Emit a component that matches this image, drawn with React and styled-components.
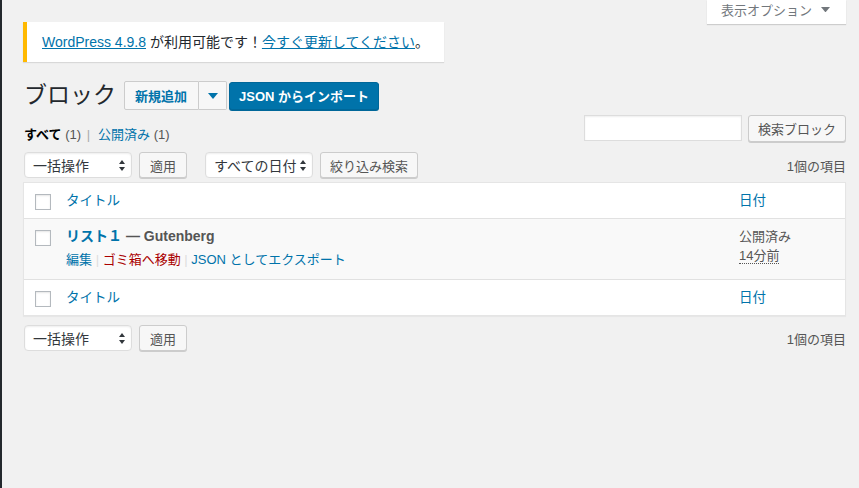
import React from "react";
import styled, { createGlobalStyle } from "styled-components";

const GlobalStyle = createGlobalStyle`
  html, body {
    margin: 0;
    padding: 0;
    background: #f1f1f1;
  }
  body {
    font-family: "Liberation Sans", "Noto Sans CJK JP", sans-serif;
    font-size: 13px;
    color: #444;
  }
  a {
    color: #0073aa;
    text-decoration: none;
  }
`;

const Shell = styled.div`
  display: flex;
  min-height: 488px;
`;

const AdminMenu = styled.div`
  width: 2px;
  flex-shrink: 0;
  background: #23282d;
`;

const Wrap = styled.div`
  flex: 1;
  display: flow-root;
  padding: 0 13px 0 21px;
`;

const ScreenTab = styled.button`
  float: right;
  display: flex;
  align-items: center;
  gap: 9px;
  height: 24px;
  padding: 0 16px 5px 14px;
  border: 0;
  background: #fff;
  box-shadow: 0 1px 1px rgba(0, 0, 0, 0.15);
  font: inherit;
  font-size: 13px;
  color: #72777c;
`;

const Notice = styled.div`
  width: fit-content;
  margin-top: 22px;
  padding: 11px 15px;
  border-left: 4px solid #ffb900;
  background: #fff;
  box-shadow: 0 1px 1px 0 rgba(0, 0, 0, 0.1);
  font-size: 14px;
  line-height: 18px;
  color: #23282d;

  a {
    text-decoration: underline;
  }
`;

const TitleRow = styled.div`
  clear: both;
  display: flex;
  align-items: center;
  height: 29px;
  margin-top: 19px;
`;

const PageTitle = styled.h1`
  margin: 0 8px 0 1px;
  font-size: 23px;
  font-weight: 400;
  line-height: 29px;
  color: #23282d;
`;

const SplitButton = styled.div`
  display: flex;
  height: 29px;
  margin-right: 2px;
`;

const AddButton = styled.button`
  box-sizing: border-box;
  height: 29px;
  padding: 0 ${(p) => (p.$toggle ? "0" : "11px 0 10px")};
  width: ${(p) => (p.$toggle ? "28px" : "auto")};
  display: flex;
  align-items: center;
  justify-content: center;
  border: 1px solid #ccc;
  border-left-width: ${(p) => (p.$toggle ? "0" : "1px")};
  border-radius: ${(p) => (p.$toggle ? "0 2px 2px 0" : "2px 0 0 2px")};
  background: #f7f7f7;
  font: inherit;
  font-size: 13px;
  font-weight: 700;
  color: #0073aa;
`;

const PrimaryButton = styled.button`
  box-sizing: border-box;
  height: 28px;
  padding: 0 9px;
  border: 1px solid #006799;
  border-radius: 3px;
  background: #0073aa;
  box-shadow: 0 1px 0 #006799;
  font: inherit;
  font-size: 13px;
  font-weight: 700;
  color: #fff;
`;

const FilterRow = styled.div`
  display: flex;
  justify-content: space-between;
  height: 27px;
  margin-top: 5px;
`;

const Views = styled.ul`
  display: flex;
  gap: 6px;
  margin: 0;
  padding: 12px 0 0 1px;
  list-style: none;
  line-height: 16px;
  font-size: 13px;
  color: #666;
`;

const ViewItem = styled.li`
  a {
    color: ${(p) => (p.$current ? "#000" : "#0073aa")};
    font-weight: ${(p) => (p.$current ? 700 : 400)};
  }
`;

const Count = styled.span`
  color: #555;
  font-weight: 400;
`;

const Sep = styled.span`
  color: #aaa;
  margin: 0 2px;
`;

const SearchBox = styled.div`
  display: flex;
  gap: 6px;
`;

const SearchInput = styled.input`
  box-sizing: border-box;
  width: 158px;
  height: 26px;
  margin: 0;
  border: 1px solid #ddd;
  background: #fff;
  box-shadow: inset 0 1px 2px rgba(0, 0, 0, 0.07);
  outline: none;
`;

const Button = styled.button`
  box-sizing: border-box;
  height: ${(p) => p.$h || 26}px;
  padding: 0 ${(p) => p.$pad || 10}px;
  border: 1px solid #ccc;
  border-radius: 3px;
  background: #f7f7f7;
  box-shadow: 0 1px 0 #ccc;
  font: inherit;
  font-size: 13px;
  color: #555;
  margin-left: ${(p) => p.$gap || 0}px;
`;

const TableNav = styled.div`
  display: flex;
  align-items: center;
  height: 26px;
  margin-top: ${(p) => p.$top}px;
  padding-left: 1px;
`;

const SelectBox = styled.div`
  box-sizing: border-box;
  display: flex;
  align-items: center;
  justify-content: space-between;
  width: 108px;
  height: 26px;
  padding: 0 6px 0 8px;
  margin-left: ${(p) => p.$gap || 0}px;
  border: 1px solid #ddd;
  border-radius: 4px;
  background: #fff;
  box-shadow: inset 0 1px 2px rgba(0, 0, 0, 0.07);
  font-size: 14px;
  color: #32373c;
`;

const ItemCount = styled.span`
  margin-left: auto;
  font-size: 13px;
  color: #555;
`;

const Table = styled.table`
  width: 100%;
  margin-top: 4px;
  border-spacing: 0;
  table-layout: fixed;
  background: #fff;
  border: 1px solid #e5e5e5;
  box-shadow: 0 1px 1px rgba(0, 0, 0, 0.04);
`;

const HeadCell = styled.th`
  padding: 8px 10px;
  text-align: left;
  font-weight: 400;
  font-size: 13.5px;
  line-height: 19px;
  border-bottom: ${(p) => (p.$foot ? "0" : "1px solid #e1e1e1")};
  border-top: ${(p) => (p.$foot ? "1px solid #e1e1e1" : "0")};
  width: ${(p) => p.$w || "auto"};
`;

const CheckCell = styled.td`
  width: 21px;
  padding: 11px 0 0 11px;
  vertical-align: top;
  border-bottom: ${(p) => (p.$head ? "1px solid #e1e1e1" : "0")};
  border-top: ${(p) => (p.$foot ? "1px solid #e1e1e1" : "0")};
`;

const Checkbox = styled.span`
  display: block;
  box-sizing: border-box;
  width: 16px;
  height: 16px;
  border: 1px solid #b4b9be;
  background: #fff;
  box-shadow: inset 0 1px 2px rgba(0, 0, 0, 0.1);
`;

const Row = styled.tr`
  background: #f9f9f9;
`;

const Cell = styled.td`
  padding: 8px 10px 9px;
  vertical-align: top;
  font-size: 13px;
  line-height: 19px;
  color: #555;
`;

const RowTitle = styled.strong`
  display: block;
  font-size: 14px;
  font-weight: 700;
  color: #555;

  a {
    color: #0073aa;
  }
`;

const RowActions = styled.div`
  margin-top: 4px;
  line-height: 20px;
  font-size: 13px;
  color: #ddd;
`;

const ActionLink = styled.a`
  color: ${(p) => (p.$danger ? "#a00" : "#0073aa")};
`;

const TimeAgo = styled.abbr`
  text-decoration: none;
  border-bottom: 1px dotted #555;
`;

const Caret = ({ color = "#72777c", w = 9 }) => (
  <svg width={w} height={w * 0.6} viewBox="0 0 10 6">
    <path d="M0 0 H10 L5 6 Z" fill={color} />
  </svg>
);

const UpDown = () => (
  <svg width="6" height="11" viewBox="0 0 6 11">
    <path d="M3 0 L6 4 H0 Z M0 7 H6 L3 11 Z" fill="#32373c" />
  </svg>
);

const Select = ({ label, gap }) => (
  <SelectBox $gap={gap}>
    <span>{label}</span>
    <UpDown />
  </SelectBox>
);

const HeadRow = ({ foot }) => (
  <tr>
    <CheckCell $head={!foot} $foot={foot}>
      <Checkbox />
    </CheckCell>
    <HeadCell $foot={foot}>
      <a href="#">タイトル</a>
    </HeadCell>
    <HeadCell $foot={foot} $w="96px">
      <a href="#">日付</a>
    </HeadCell>
  </tr>
);

export default function App() {
  return (
    <>
      <GlobalStyle />
      <Shell>
        <AdminMenu />
        <Wrap>
          <ScreenTab>
            表示オプション
            <Caret />
          </ScreenTab>
          <Notice>
            <a href="#">WordPress 4.9.8</a> が利用可能です！
            <a href="#">今すぐ更新してください</a>。
          </Notice>

          <TitleRow>
            <PageTitle>ブロック</PageTitle>
            <SplitButton>
              <AddButton>新規追加</AddButton>
              <AddButton $toggle>
                <Caret color="#0073aa" w={10} />
              </AddButton>
            </SplitButton>
            <PrimaryButton>JSON からインポート</PrimaryButton>
          </TitleRow>

          <FilterRow>
            <Views>
              <ViewItem $current>
                <a href="#">
                  すべて <Count>(1)</Count>
                </a>
                <Sep> |</Sep>
              </ViewItem>
              <ViewItem>
                <a href="#">
                  公開済み <Count>(1)</Count>
                </a>
              </ViewItem>
            </Views>
            <SearchBox>
              <SearchInput type="search" />
              <Button $h={27} $pad={9}>検索ブロック</Button>
            </SearchBox>
          </FilterRow>

          <TableNav $top={10}>
            <Select label="一括操作" />
            <Button $gap={7}>適用</Button>
            <Select label="すべての日付" gap={18} />
            <Button $gap={7} $pad={9}>絞り込み検索</Button>
            <ItemCount>1個の項目</ItemCount>
          </TableNav>

          <Table>
            <thead>
              <HeadRow />
            </thead>
            <tbody>
              <Row>
                <CheckCell>
                  <Checkbox />
                </CheckCell>
                <Cell>
                  <RowTitle>
                    <a href="#">リスト１</a> — Gutenberg
                  </RowTitle>
                  <RowActions>
                    <ActionLink href="#">編集</ActionLink> |{" "}
                    <ActionLink href="#" $danger>
                      ゴミ箱へ移動
                    </ActionLink>{" "}
                    | <ActionLink href="#">JSON としてエクスポート</ActionLink>
                  </RowActions>
                </Cell>
                <Cell>
                  公開済み
                  <br />
                  <TimeAgo title="2018/08/03 10:00:00">14分前</TimeAgo>
                </Cell>
              </Row>
            </tbody>
            <tfoot>
              <HeadRow foot />
            </tfoot>
          </Table>

          <TableNav $top={9}>
            <Select label="一括操作" />
            <Button $gap={7}>適用</Button>
            <ItemCount>1個の項目</ItemCount>
          </TableNav>
        </Wrap>
      </Shell>
    </>
  );
}
